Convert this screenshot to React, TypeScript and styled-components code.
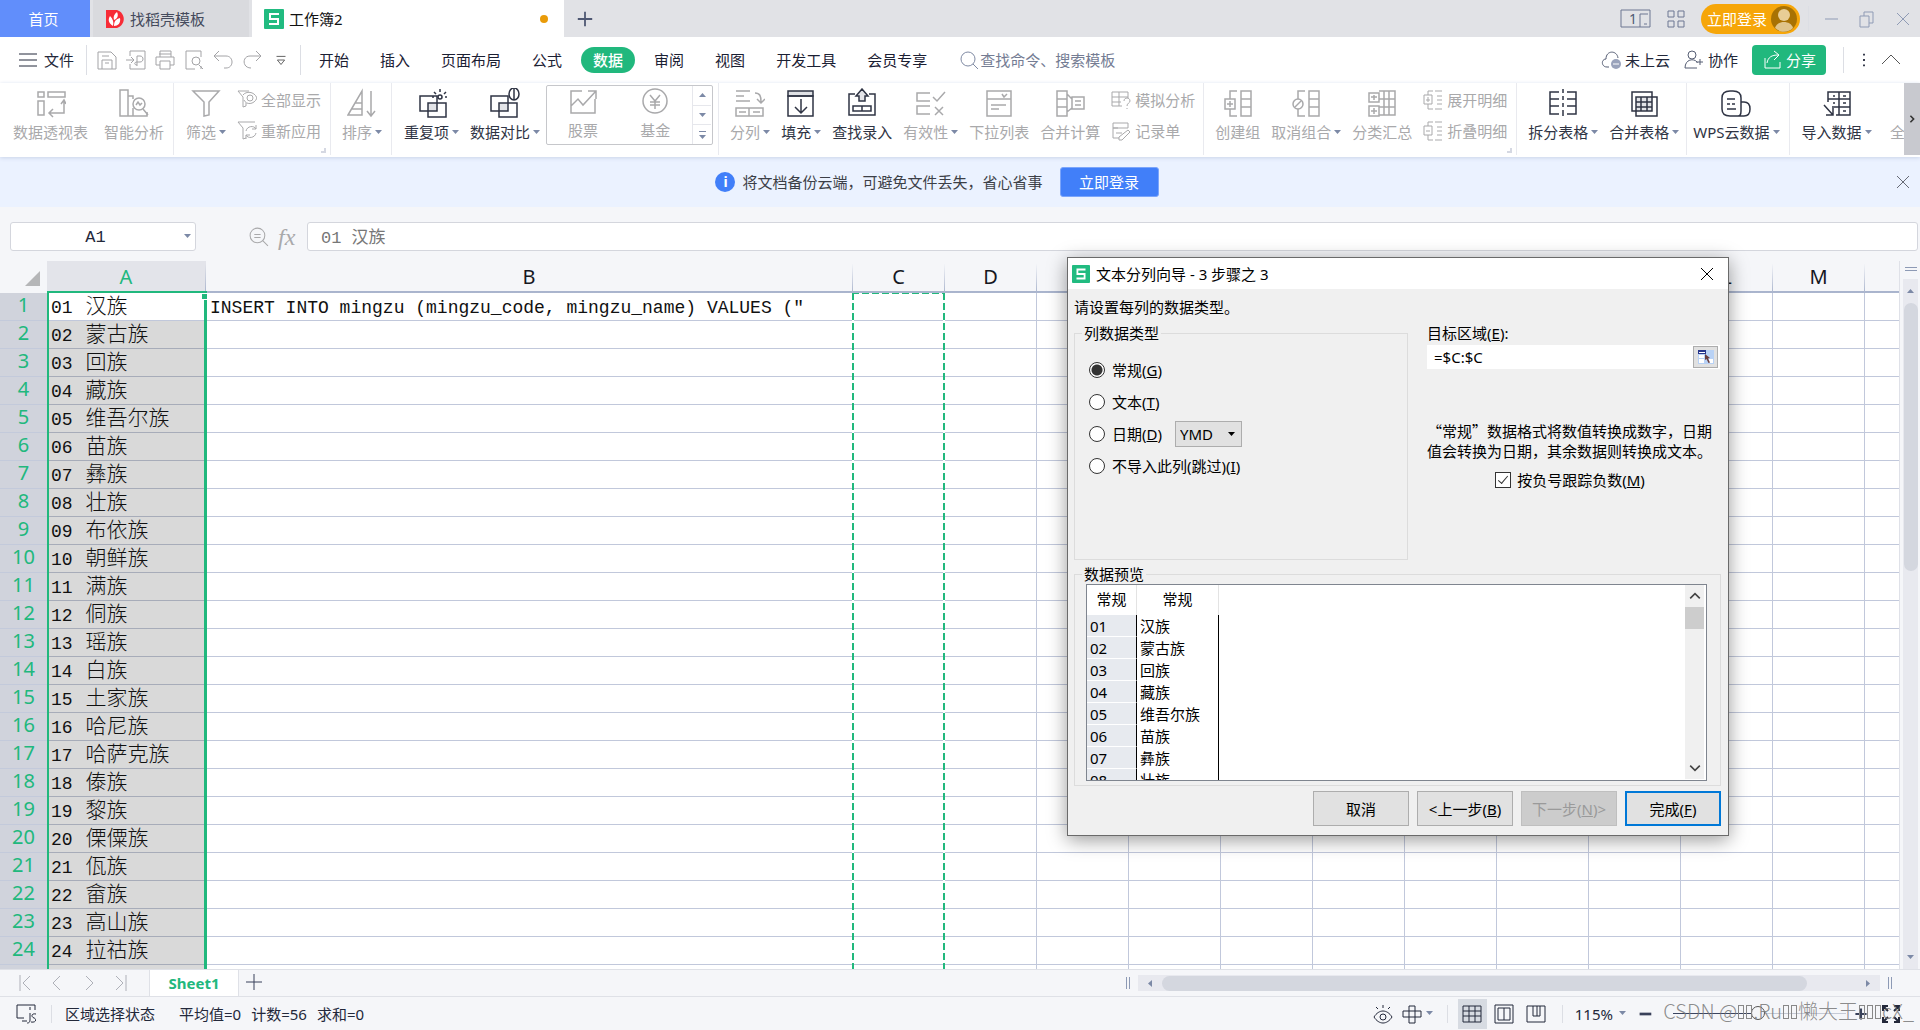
import React from 'react';
import styled, { createGlobalStyle, css } from 'styled-components';

const UI = `"Noto Sans", "Noto Sans CJK SC", sans-serif`;
const CJK = `"Noto Sans CJK SC", "Noto Sans", sans-serif`;
const MONO = `"Liberation Mono", "Noto Sans CJK SC", monospace`;
const GREEN = '#21b87d';
const INK = '#23283a';
const MUTED = '#a9a9ab';
const LINE = '#c1c8db';

const Global = createGlobalStyle`
  *, *::before, *::after { box-sizing: border-box; }
  body { margin: 0; background: #f5f6f9; overflow: hidden; }
  button, input, select { font: inherit; color: inherit; margin: 0; padding: 0; border: 0; background: none; }
  button { cursor: pointer; white-space: nowrap; }
  svg { display: block; flex: none; }
`;

/* ---------- icons ---------- */

const ICONS: Record<string, React.ReactNode> = {
  pivot: <path d="M2 4h6v5H2zM12 4h17v5H12zM2 13h6v14H2zM28 13v12H13M25 16l3-4 2 4M17 21l-4 4 4 4" />,
  smart: <><path d="M1 2h8v26H1zM9 8h5v3M9 28h19v-4M14 20v8" /><circle cx="20" cy="16" r="6" /><path d="M17 17l2-3 2 3 2-2M24 21l5 6" /></>,
  funnel: <path d="M2 3h26L18 14v13l-5 1V14z" />,
  sort: <path d="M1 27L15 3v24zM4 21h11M8 15h7M24 3v25M20 23l4 5 4-5" />,
  repeat: <><path d="M11 15h9v8h-9z" fill="#e3e4e8" stroke="none" /><path d="M3 8h17v15H3zM11 15h18v14H11z" /><circle cx="23" cy="9" r="2" /><path d="M23 1v3M17 4l2 2M29 4l-2 2M17 9h-2M28 9h3" /></>,
  compare: <><path d="M9 15h9v8H9z" fill="#e3e4e8" stroke="none" /><path d="M1 8h17v15H1zM9 15h18v14H9z" /><ellipse cx="24" cy="6" rx="5" ry="6" fill="#fff" /><path d="M24 0v12" /></>,
  stock: <path d="M14 5H3v22h24V13M3 20l7-7 5 6L28 5M20 5h8v8" />,
  fund: <><circle cx="15" cy="15" r="12" /><path d="M10 9l5 6 5-6M15 15v8M10 16h10M10 19h10" /></>,
  split: <path d="M1 3h14M1 8h8M1 13h14M1 20h27v8H1zM14 20v8M4 24h7M18 24h7M20 5c5 0 6 3 6 9M22 11l4 4 4-4" />,
  fill: <><path d="M2 3h25v5H2z" fill="#dfe1e5" /><path d="M2 8h25v20H2zM15 11v13M9 19l6 6 6-6" /></>,
  lookup: <><path d="M8 6H2v21h26V6h-6M6 18h18v5H6zM15 18v5" /><path d="M12 13V8H9l6-7 6 7h-3v5z" fill="#e3e4e8" /></>,
  valid: <path d="M14 5H1v8h13M14 18H1v8h13M17 9l4 4 8-9M19 19l8 8M27 19l-8 8" />,
  dropdown: <><path d="M3 3h24v8H3zM3 11h24v17H3zM7 17h15M7 21h8" /><path d="M18 6l2 3 3-3" /></>,
  consolidate: <path d="M2 3h10v25H2zM2 11h10M2 19h10M12 6l5 5v9l-5 4M17 9h12v12H17zM20 13h6M20 17h6" />,
  group: <path d="M28 3H18v25h10zM18 11h10M18 19h10M14 3H7v8M14 28H7v-7M2 11h10v10H2zM7 13v6M4 16h6" />,
  ungroup: <><path d="M28 3H18v25h10zM18 11h10M18 19h10M14 3H7v8M14 28H7v-7" /><circle cx="7" cy="16" r="5" /><path d="M4 19l6-6" /></>,
  subtotal: <path d="M12 3h16v24H12M17 3v24M22 3v24M12 11h16M12 19h16M2 5h10v9H2zM2 18h10v10H2zM7 7v5M4 9h6M7 20v6M4 23h6" />,
  splitTable: <path d="M11 4H2v22h9M2 11h9M2 18h9M19 4h9v22h-9M28 11h-9M28 18h-9M15 1v4M15 8v4M15 15v4M15 22v6" />,
  mergeTable: <><path d="M7 9h16v14H7z" fill="#e3e4e8" stroke="none" /><path d="M3 4h20v19H3zM7 9h21v19H7zM12 9v14M18 9v14M7 14h16M7 19h16" /></>,
  cloudData: <path d="M9 28c-5 0-8-2-8-7V10C1 5 4 3 9 3h3c5 0 8 2 8 7v5M9 28h14c4 0 6-3 6-7s-2-7-6-7h-3v9c0 3-1 5-3 5M6 11h8M6 16h3M11 16h3M6 21h9" />,
  importData: <path d="M6 14V4h22v23H14M17 4v23M6 11h22M10 19h18M11 8h2M21 8h3M11 15h2M21 15h3M21 23h3M2 17l9 10M11 20v7H4" />,
  all: <path d="M4 4h20v20H4z" stroke="none" />,
};

const SMALL: Record<string, React.ReactNode> = {
  showAll: <><path d="M12 1H1l5 6v10l3-1v-3" /><path d="M6 5c3-4 11-4 14 3-3 7-11 7-13 2" /><circle cx="13" cy="8" r="3" /></>,
  reapply: <><path d="M18 1H1l5 6v11l3-1" /><path d="M9 10c1-5 8-6 10-2M19 4v4h-4M19 12c-1 5-8 6-10 2M9 18v-4h4" /></>,
  whatIf: <path d="M11 16H1V2h16v6M1 7h16M1 12h9M8 2v14M13 11c0-4 6-4 6 0 0 2-3 2-3 5M16 18v1" />,
  record: <path d="M8 17H2V7h5M2 2h15v5H2zM5 12h6M17 9l2 2-8 8H8v-3z" />,
  expand: <path d="M10 1H5v4M10 19H5v-5M1 5h8v9H1zM5 7v5M3 10h4M12 1h7M14 6h5M14 10h5M14 14h5M12 19h7" />,
  collapse: <path d="M10 1H5v4M10 19H5v-5M1 5h8v9H1zM3 10h4M12 1h7M14 6h5M14 10h5M14 14h5M12 19h7" />,
  save: <path d="M1 2h13l5 5v12H1zM5 19v-9h10v9M5 6h7M8 13h4" />,
  export: <path d="M4 6V1h15v18H4v-5M0 10h7M5 7l3 3-3 3M11 16V6h3c4 0 4 6 0 6h-3c-3 0-3 3 0 3" />,
  print: <path d="M5 7V1h11v6M5 15H1V7h18v8h-4M5 11h10v8H5zM4 4h12" />,
  preview: <><path d="M11 19H2V1h15v6M17 16v3" /><circle cx="12" cy="11" r="4" /><path d="M15 15l4 4" /></>,
  undo: <path d="M2 6h11c8 0 8 12 0 12h-2M6 1L1 6l5 5" />,
  redo: <path d="M18 6H8c-8 0-8 12 1 12M14 1l5 5-5 5" />,
  burger: <path d="M1 4h18M1 10h18M1 16h18" />,
  more: <path d="M5 6h10M6 10l4 5 4-5z" />,
  search: <><circle cx="9" cy="9" r="7" /><path d="M14 14l5 5" /></>,
  plus: <path d="M10 2v16M2 10h16" />,
  cloud: <><path d="M8 17H6c-6 0-6-8-1-8C5 0 16 0 17 8" /><circle cx="15" cy="14" r="5" fill="#9aa3bb" stroke="none" /><path d="M12 14h6" stroke="#fff" /></>,
  team: <><circle cx="8" cy="5" r="4" /><path d="M13 18H1c0-9 9-10 12-6v1M16 9v6M13 12h6" /></>,
  share: <path d="M3 8v10h15v-6M5 13c1-6 5-8 11-8M12 1l5 4-5 5" />,
  dots: <path d="M10 3v2M10 9v2M10 15v2" strokeWidth="2" />,
  up: <path d="M1 14l9-9 9 9" />,
  grid4: <path d="M2 2h6v6H2zM12 2h6v6h-6zM2 12h6v6H2zM12 12h6v6h-6z" />,
  min: <path d="M4 10h13" />,
  restore: <path d="M3 7h9v11H3zM7 7V3h9v11h-4" />,
  close: <path d="M4 4l12 12M16 4L4 16" />,
  lens: <><circle cx="9" cy="9" r="7" /><path d="M14 14l5 5M6 8h6M6 11h6" /></>,
  first: <path d="M5 2v16M15 3l-7 7 7 7" />,
  prev: <path d="M13 3l-7 7 7 7" />,
  next: <path d="M7 3l7 7-7 7" />,
  last: <path d="M15 2v16M5 3l7 7-7 7" />,
  right: <path d="M8 6l4 4-4 4" strokeWidth="2" />,
  sbUp: <path d="M4 13l6-6 6 6" />,
  sbDown: <path d="M4 7l6 6 6-6" />,
  macro: <path d="M8 14H1V1h18v5M14 6v-3M6 17h5M14 9v7c0 3-2 3-3 3M20 10c-5-1-5 3-2 4s2 5-3 4" />,
  eye: <><path d="M1 13c5-8 13-8 18 0-5 8-13 8-18 0zM10 1v3M3 3l2 2M17 3l-2 2" /><circle cx="10" cy="13" r="3" /></>,
  cross: <path d="M7 2h6v17H7zM1 7h18v6H1z" />,
  sheet: <path d="M1 2h18v16H1zM1 7h18M1 12h18M7 2v16M13 2v16" />,
  pages: <path d="M1 1h18v18H1zM4 4h12v12H4zM10 4v12" />,
  breaks: <path d="M1 2h18v16H1zM7 2v10h7V2M11 2v10" />,
  full: <path d="M2 7V2h5M2 2l5 5M13 2h5v5M18 2l-5 5M18 13v5h-5M18 18l-5-5M7 18H2v-5M2 18l5-5" />,
};

const Icon = ({ name, size = 20, color = 'currentColor', w = 1 }: { name: string; size?: number; color?: string; w?: number }) => (
  <svg width={size} height={size} viewBox="0 0 20 20" fill="none" stroke={color} strokeWidth={w} aria-hidden="true">{SMALL[name]}</svg>
);
const BigIcon = ({ name }: { name: string }) => (
  <svg width="30" height="30" viewBox="0 0 30 30" fill="none" stroke="currentColor" strokeWidth="1.5" aria-hidden="true">{ICONS[name]}</svg>
);
const Caret = ({ dir = 'down', color = '#7c89a6' }: { dir?: 'down' | 'up' | 'left' | 'right'; color?: string }) => {
  const d = { down: 'M0 1h7L3.5 5z', up: 'M0 5h7L3.5 1z', left: 'M5 0v7L1 3.5z', right: 'M1 0v7l4-3.5z' }[dir];
  return <svg width="7" height="7" viewBox="0 0 7 7" fill={color} aria-hidden="true"><path d={d} /></svg>;
};
const WpsMark = ({ size }: { size: number }) => (
  <svg width={size} height={size} viewBox="0 0 20 20" aria-hidden="true">
    <rect width="20" height="20" rx="1" fill="#21bb80" />
    <path d="M15 5H6v5h8v5H5" fill="none" stroke="#fff" strokeWidth="2" />
  </svg>
);

/* ---------- frame ---------- */

const Page = styled.div`
  height: 100vh; display: flex; flex-direction: column; position: relative; overflow: hidden;
  font: 15px/20px ${UI}; color: ${INK}; background: #f5f6f9;
`;
const Row = styled.div<{ gap?: number }>`display: flex; align-items: center; gap: ${p => p.gap ?? 0}px;`;
const Spacer = styled.div`flex: 1;`;
const VRule = styled.i<{ h?: number; m?: string }>`
  flex: none; width: 1px; height: ${p => p.h ?? 30}px; margin: ${p => p.m ?? '0'}; background: #dcdee4;
`;
const IconButton = styled.button<{ w?: number }>`
  display: flex; align-items: center; justify-content: center; width: ${p => p.w ?? 20}px; height: 24px; flex: none;
`;

const TitleBar = styled.header`
  flex: none; height: 37px; display: flex; align-items: stretch; background: #e1e2e6; padding-right: 7px;
`;
const HomeTab = styled.button`width: 90px; padding-right: 3px; background: #618efb; color: #fff;`;
const DocTab = styled.button<{ active?: boolean; w: number }>`
  width: ${p => p.w}px; padding: 0 16px 0 12px; display: flex; align-items: center; gap: 5px;
  margin-left: 3px; background: ${p => (p.active ? '#fff' : '#d9dade')}; color: ${p => (p.active ? '#111' : '#444a5c')};
`;
const DirtyDot = styled.i`width: 8px; height: 8px; border-radius: 50%; background: #e99b09; margin-left: auto;`;
const LoginPill = styled.button`
  display: flex; align-items: center; gap: 4px; height: 30px; padding: 0 3px 0 6px; border-radius: 15px;
  background: #f6a609; color: #fff;
`;

const MenuBar = styled.nav`
  flex: none; height: 46px; display: flex; align-items: center; background: #fff; padding: 0 12px 0 18px;
`;
const FileButton = styled.button`display: flex; align-items: center; gap: 6px;`;
const QuickTools = styled.div`display: flex; align-items: center; gap: 9px; color: #a3a3a6; padding: 0 9px 0 10px;`;
const MenuTabs = styled.div`display: flex; align-items: center; gap: 7px; padding-left: 6px;`;
const MenuTab = styled.button<{ active?: boolean }>`
  height: 26px; padding: 0 12px; border-radius: 13px; color: #1b2033;
  ${p => p.active && css`background: ${GREEN}; color: #fff; font-weight: 500;`}
`;
const SearchBox = styled.label`display: flex; align-items: center; gap: 1px; margin-left: 20px; color: #7f8aa3;
  input { width: 200px; outline: 0; }
  input::placeholder { color: #747c93; opacity: 1; }
`;
const MenuAction = styled.button`display: flex; align-items: center; gap: 4px; margin-right: 14px;`;
const ShareButton = styled.button`
  display: flex; align-items: center; gap: 4px; height: 30px; padding: 0 10px; border-radius: 4px;
  background: ${GREEN}; color: #fff;
`;

/* ---------- ribbon ---------- */

const Ribbon = styled.div`
  flex: none; display: flex; height: 74px; background: #fff; box-shadow: 0 1px 4px #c9d3e8; position: relative; z-index: 1;
`;
const RibbonScroll = styled.div`flex: 1; min-width: 0; overflow: hidden; display: flex; height: 72px;`;
const RibbonNext = styled.button`
  width: 16px; height: 72px; background: #c8c9cf; color: #333; display: flex; align-items: center; justify-content: center;
`;
const Group = styled.div<{ l?: number; r?: number; gap?: number; last?: boolean }>`
  flex: none; display: flex; gap: ${p => p.gap ?? 11}px; padding: 5px ${p => p.r ?? 9}px 0 ${p => p.l ?? 12}px; position: relative;
  border-right: ${p => (p.last ? 0 : 1)}px solid #e9eaef;
`;
const GroupCorner = styled.i`
  position: absolute; right: 4px; bottom: 2px; width: 5px; height: 5px; border: solid #d5d8e2; border-width: 0 2px 2px 0;
`;
const Tool = styled.button<{ on?: boolean }>`
  display: flex; flex-direction: column; align-items: center; gap: 4px; height: 56px; color: ${p => (p.on ? '#2f3444' : MUTED)};
`;
const ToolLabel = styled.span`display: flex; align-items: center; gap: 3px; line-height: 20px;`;
const ToolStack = styled.div`display: flex; flex-direction: column; gap: 7px;`;
const MiniTool = styled.button`display: flex; align-items: center; gap: 4px; height: 24px; color: ${MUTED};`;
const Gallery = styled.div`
  display: flex; width: 167px; height: 60px; margin: -3px 0 0 -5px; border: 1px solid #c6c7cb; border-radius: 2px;
  gap: 42px; padding-left: 21px;
`;
const GalleryArrows = styled.div`
  display: flex; flex-direction: column; width: 19px; margin-left: -20px; border-left: 1px solid #e6e7ec;
  button { flex: 1; display: flex; align-items: center; justify-content: center; }
  button + button { border-top: 1px solid #e6e7ec; }
`;

const BigTool = ({ icon, label, on, menu }: { icon: string; label: string; on?: boolean; menu?: boolean }) => (
  <Tool on={on}><BigIcon name={icon} /><ToolLabel>{label}{menu && <Caret />}</ToolLabel></Tool>
);
const SmallTool = ({ icon, label }: { icon: string; label: string }) => (
  <MiniTool><Icon name={icon} /><span>{label}</span></MiniTool>
);

/* ---------- notice and formula bar ---------- */

const Notice = styled.div`
  flex: none; height: 50px; background: #ebf2ff; display: grid; grid-template-columns: 1fr auto 1fr; align-items: center;
  color: #3c3f47; padding: 0 7px;
`;
const NoticeText = styled.div`display: flex; align-items: center; gap: 7px; margin-right: 46px;`;
const InfoDot = styled.i`
  width: 20px; height: 20px; border-radius: 50%; background: #417ff9; color: #fff; font: 700 14px/20px ${UI}; text-align: center;
`;
const NoticeButton = styled.button`
  width: 99px; height: 30px; margin-left: 10px; background: #417ff9; color: #fff; border: 1px solid #7ba5fb; border-radius: 3px;
`;
const NoticeClose = styled(IconButton)`justify-self: end; color: #666a75;`;

const FormulaBar = styled.div`
  flex: none; height: 54px; padding: 15px 2px 10px 10px; display: flex; align-items: center; font: 17px/20px ${MONO};
`;
const NameBox = styled.label`
  width: 186px; height: 29px; display: flex; align-items: center; background: #fff; border: 1px solid #d4d6dd; border-radius: 3px;
  padding-right: 4px; margin-right: 52px;
  input { flex: 1; min-width: 0; text-align: center; padding: 2px 4px 0 0; outline: 0; }
`;
const Fx = styled.span`font: italic 24px/24px "Liberation Serif", serif; color: #a9a9ab; width: 28px; padding-left: 9px; margin-right: 10px;`;
const FormulaInput = styled.input`
  && { flex: 1; height: 29px; padding: 0 13px 2px; background: #fff; border: 1px solid #d4d6dd; border-radius: 3px; color: #777; outline: 0; }
`;

/* ---------- grid ---------- */

const Workspace = styled.main`flex: 1; min-height: 0; display: flex;`;
const SheetView = styled.div`
  flex: 1; min-width: 0; overflow: hidden; position: relative; background: linear-gradient(#f5f6f9 32px, #fff 32px);
  border-right: 1px solid #dfe1e8;
`;
const Grid = styled.table`
  table-layout: fixed; border-collapse: separate; border-spacing: 0; font: 18px/24px ${MONO}; color: #111;
`;
const ColHead = styled.th<{ on?: boolean }>`
  height: 32px; padding: 1px 0 0; font: 400 20px/26px ${UI}; color: ${p => (p.on ? GREEN : '#16181f')};
  border-bottom: 1px solid #a9b4cd; border-right: 1px solid;
  border-image: linear-gradient(transparent 10%, #a9b4cd) 1;
  background: ${p => (p.on ? '#e3e4ea' : 'transparent')};
  box-shadow: inset 0 -1px #a9b4cd;
`;
const Corner = styled.th`
  height: 32px; padding: 0 7px 7px 0; vertical-align: bottom;
  svg { margin-left: auto; }
`;
const RowHead = styled.th`
  height: 28px; padding: 0 0 3px; font: 400 20px/24px ${UI}; color: ${GREEN}; background: #d0d3dc; border-bottom: 1px solid #c3cadb;
  text-align: center;
`;
const Cell = styled.td<{ picked?: boolean }>`
  height: 28px; padding: 3px 0 0 4px; white-space: pre; overflow: hidden; line-height: 24px;
  border-bottom: 1px solid ${p => (p.picked ? '#a7acb9' : LINE)}; border-right: 1px solid ${LINE};
  background: ${p => (p.picked ? '#d9d9d9' : '#fff')};
`;
const Code = styled.span`margin-right: 2px;`;
const Name = styled.span`font-size: 21px; line-height: 20px; font-weight: 300;`;
const Selection = styled.div`
  position: absolute; left: 47px; top: 30px; bottom: -10px; width: 160px; border: solid ${GREEN}; border-width: 2px 3px 0 2px;
`;
const Handle = styled.i`
  position: absolute; right: -4px; top: 0; width: 7px; height: 7px; background: ${GREEN}; border: 1px solid #fff;
`;
const Marching = styled.div`
  position: absolute; left: 852px; top: 32px; bottom: -10px; width: 93px;
  background:
    repeating-linear-gradient(180deg, ${GREEN} 0 7px, #fff 7px 10px) left / 2px 100% no-repeat,
    repeating-linear-gradient(180deg, ${GREEN} 0 7px, #fff 7px 10px) right / 2px 100% no-repeat,
    repeating-linear-gradient(90deg, ${GREEN} 0 7px, #fff 7px 10px) top / 100% 1px no-repeat;
`;

const VScroll = styled.div`
  flex: none; width: 20px; padding: 6px 2px 0 3px; display: flex; flex-direction: column; gap: 8px;
`;
const Grip = styled.i<{ v?: boolean }>`
  flex: none; align-self: center;
  ${p => (p.v
    ? css`width: 4px; height: 12px; border: solid #8d9ab5; border-width: 0 1px;`
    : css`width: 12px; height: 4px; border: solid #8d9ab5; border-width: 1px 0;`)}
`;
const VTrack = styled.div`
  flex: 1; min-height: 0; background: #e8e9ef; display: flex; flex-direction: column; align-items: center;
  button { height: 24px; }
`;
const VThumb = styled.div`width: 14px; height: 268px; border-radius: 7px; background: #d4d7df;`;

/* ---------- bottom bars ---------- */

const SheetBar = styled.div`
  flex: none; height: 28px; border: solid #dfe1e7; border-width: 1px 0; display: flex; align-items: stretch; padding-right: 28px;
`;
const SheetNav = styled.div`display: flex; align-items: center; gap: 12px; padding-left: 15px; width: 149px; color: #aeb0b8;`;
const SheetTab = styled.button`width: 90px; background: #fff; color: ${GREEN}; font-weight: 700; border: solid #dfe1e7; border-width: 0 1px;`;
const HScroll = styled.div`width: 766px; display: flex; align-items: center; gap: 8px;`;
const HTrack = styled.div`
  flex: 1; height: 16px; background: #e8e9ef; display: flex; align-items: center;
  button { width: 24px; display: flex; justify-content: center; }
`;
const HThumb = styled.div`width: 645px; height: 15px; border-radius: 8px; background: #d4d7df;`;

const StatusBar = styled.footer`flex: none; height: 33px; display: flex; align-items: center; padding: 0 6px 0 16px; position: relative;`;
const ViewButton = styled.button<{ on?: boolean }>`
  width: 29px; height: 30px; display: flex; align-items: center; justify-content: center; background: ${p => (p.on ? '#d7dbe2' : 'none')};
  margin-right: 3px;
`;
const Zoom = styled.input`
  && { width: 173px; height: 20px; appearance: none; margin: 0 8px 0 9px; }
  &::-webkit-slider-runnable-track { height: 1px; background: linear-gradient(90deg, #3b4560 48%, #c5cad6 48%); }
  &::-webkit-slider-thumb { appearance: none; width: 14px; height: 14px; margin-top: -7px; border: 1px solid #555; border-radius: 50%; background: #f5f6f9; }
`;
const Watermark = styled.span`
  position: absolute; right: 6px; bottom: 5px; font: 300 20px/28px ${CJK}; color: rgba(120, 120, 120, 0.85); white-space: pre;
  pointer-events: none;
`;
const Missing = styled.i`display: inline-block; width: 6px; height: 14px; margin: 0 1px; border: 1px solid #888;`;

/* ---------- dialog ---------- */

const Dialog = styled.section`
  position: absolute; left: 1067px; top: 257px; width: 662px; z-index: 2; background: #f0f0f0; border: 1px solid #6a6a6a; color: #000;
  box-shadow: 0 4px 18px rgba(0, 0, 0, 0.4); font: 15px/20px ${UI};
`;
const DialogTitle = styled.div`
  height: 31px; background: #fff; display: flex; align-items: center; gap: 6px; padding: 0 11px 0 4px;
  h1 { margin: 0; flex: 1; font: inherit; }
`;
const DialogBody = styled.div`padding: 8px 7px 9px 6px;`;
const Intro = styled.p`margin: 0 0 6px;`;
const Columns = styled.div`display: flex; gap: 18px; align-items: flex-start;`;
const FieldBox = styled.fieldset<{ w?: string; h: number; top?: number }>`
  position: relative; margin: ${p => p.top ?? 10}px 0 0; padding: 0; min-width: 0; width: ${p => p.w ?? 'auto'}; height: ${p => p.h}px;
  border: 1px solid #dcdcdc;
  legend { float: left; margin-top: -11px; margin-left: 7px; padding: 0 2px; background: #f0f0f0; position: relative; z-index: 1; }
`;
const Options = styled.div`clear: both; padding: 13px 0 0 14px; display: flex; flex-direction: column; gap: 4px;`;
const Option = styled.div`height: 28px; display: flex; align-items: center;
  label { display: flex; align-items: center; gap: 7px; }
`;
const Radio = styled.input.attrs({ type: 'radio', name: 'column-type' })`
  && { appearance: none; width: 16px; height: 16px; border: 1px solid #333; border-radius: 50%; background: #fff; }
  &&:checked { background: radial-gradient(circle, #333 5px, #fff 6px); }
`;
const FormatSelect = styled.div`
  display: grid; width: 67px; height: 26px; margin-left: 13px; align-items: center;
  select, svg { grid-area: 1 / 1; }
  select { appearance: none; height: 26px; padding-left: 4px; background: #e1e1e1; border: 1px solid #adadad; }
  svg { justify-self: end; margin-right: 7px; pointer-events: none; }
`;
const Target = styled.div`flex: 1; padding-left: 1px;`;
const TargetBox = styled.div`
  display: flex; width: 293px; height: 24px; margin-top: 2px; padding: 1px 2px 1px 7px; background: #fff; align-items: stretch;
  input { flex: 1; min-width: 0; outline: 0; }
  button { width: 25px; background: #e1e1e1; border: 1px solid #adadad; display: flex; align-items: center; justify-content: center; }
`;
const Hint = styled.p`margin: 52px 0 9px; font-family: ${CJK}; width: 292px; white-space: nowrap;`;
const Check = styled.label`display: flex; align-items: center; gap: 6px; justify-content: center; padding-right: 8px;`;
const CheckBox = styled.input.attrs({ type: 'checkbox' })`
  && { appearance: none; width: 16px; height: 16px; border: 1px solid #333; background: #fff; display: grid; place-items: center; }
  &&:checked::after { content: ''; width: 10px; height: 5px; border: solid #333; border-width: 0 0 1px 1px; transform: translateY(-2px) rotate(-50deg); }
`;
const PreviewBox = styled.div`
  clear: both; height: 197px; border: 1px solid #7f858f; background: #fff; display: flex; justify-content: space-between;
  padding: 0 2px 1px 0; overflow: hidden; position: relative;
`;
const PreviewWrap = styled.div`padding: 8px 13px 0 11px;`;
const PreviewTable = styled.table`
  border-collapse: separate; border-spacing: 0; table-layout: fixed; width: 132px; align-self: flex-start;
  th { height: 30px; padding: 0 0 2px; font-weight: 400; border-right: 1px solid #e3e3e3; }
  td { height: 22px; padding: 0 0 0 3px; line-height: 20px; border-right: 1px solid #000; white-space: nowrap; }
  td:first-child { background: #e7eaef; border-bottom: 1px solid #fff; }
`;
const PreviewScroll = styled.div`
  flex: none; width: 19px; background: #f0f0f0; display: flex; flex-direction: column; justify-content: space-between; color: #444;
  button { height: 22px; display: flex; align-items: center; justify-content: center; width: 19px; }
`;
const PreviewThumb = styled.div`height: 22px; background: #cdcdcd; margin-bottom: auto;`;
const Actions = styled.div`display: flex; justify-content: flex-end; gap: 8px; margin-top: 5px;`;
const ActionButton = styled.button<{ main?: boolean }>`
  && { width: 96px; height: 35px; background: #e1e1e1; border: ${p => (p.main ? '2px solid #0078d7' : '1px solid #adadad')}; }
  &&:disabled { background: #ccc; border-color: #bfbfbf; color: #9a9a9a; }
`;

/* ---------- data ---------- */

const NAMES = ['汉族', '蒙古族', '回族', '藏族', '维吾尔族', '苗族', '彝族', '壮族', '布依族', '朝鲜族', '满族', '侗族', '瑶族', '白族', '土家族', '哈尼族', '哈萨克族', '傣族', '黎族', '傈僳族', '佤族', '畲族', '高山族', '拉祜族'];
const PEOPLES = NAMES.map((name, i) => ({ code: String(i + 1).padStart(2, '0'), name }));
const COLS: { id: string; label: string; width: number }[] = [
  { id: 'A', label: 'A', width: 159 },
  { id: 'B', label: 'B', width: 647 },
  ...'CDEFGHIJKLM'.split('').map(c => ({ id: c, label: c, width: 92 })),
  { id: 'N', label: '', width: 92 },
];
const GRID_WIDTH = COLS.reduce((sum, c) => sum + c.width, 47);
const QUERY = 'INSERT INTO mingzu (mingzu_code, mingzu_name) VALUES ("';
const MENUS = ['开始', '插入', '页面布局', '公式', '数据', '审阅', '视图', '开发工具', '会员专享'];

const Header = () => (
  <TitleBar>
    <HomeTab>首页</HomeTab>
    <DocTab w={156}>
      <svg width="20" height="20" viewBox="0 0 20 20" aria-hidden="true">
        <path d="M1 1h11c9 3 9 15 0 18H1z" fill="#f72c37" />
        <path d="M8 17C3 14 3 10 5 7c3 3 4 6 3 10zM9 11c-1-3 0-6 3-8 2 4 0 7-3 8zM9 17c0-5 2-7 6-8 1 5-2 8-6 8z" fill="#fff" />
      </svg>
      找稻壳模板
    </DocTab>
    <DocTab active w={312}><WpsMark size={20} />工作簿2<DirtyDot /></DocTab>
    <Row><IconButton w={42} aria-label="新建"><Icon name="plus" w={2} color="#4f5873" size={18} /></IconButton></Row>
    <Spacer />
    <Row gap={15}>
      <svg width="31" height="20" viewBox="0 0 31 20" fill="none" stroke="#6d7792" aria-hidden="true">
        <path d="M1 1h29v17H1zM20 18V5h8M24 15h3" />
        <text x="9" y="15" fontSize="14" fill="#4f5873" stroke="none">1</text>
      </svg>
      <Icon name="grid4" color="#6d7792" />
      <LoginPill>立即登录
        <svg width="26" height="26" viewBox="0 0 26 26" aria-hidden="true">
          <circle cx="13" cy="13" r="13" fill="#a87203" /><circle cx="13" cy="9" r="6" fill="#e8cd96" />
          <path d="M4 22c2-8 16-8 18 0-5 5-13 5-18 0z" fill="#e0c48a" />
        </svg>
      </LoginPill>
    </Row>
    <Row gap={16}>
      <VRule h={25} m="0 -4px 0 8px" />
      <IconButton aria-label="最小化"><Icon name="min" color="#8f9bb5" /></IconButton>
      <IconButton aria-label="还原"><Icon name="restore" color="#8f9bb5" /></IconButton>
      <IconButton aria-label="关闭"><Icon name="close" color="#8f9bb5" /></IconButton>
    </Row>
  </TitleBar>
);

const Menu = () => (
  <MenuBar>
    <FileButton><Icon name="burger" w={1} />文件</FileButton>
    <VRule m="0 0 0 12px" />
    <QuickTools>
      {['save', 'export', 'print', 'preview', 'undo', 'redo', 'more'].map(n => (
        <IconButton key={n} aria-label={n}><Icon name={n} size={n === 'more' ? 18 : 20} color={n === 'more' ? '#555' : 'currentColor'} /></IconButton>
      ))}
    </QuickTools>
    <VRule />
    <MenuTabs>{MENUS.map(m => <MenuTab key={m} active={m === '数据'}>{m}</MenuTab>)}</MenuTabs>
    <SearchBox><Icon name="search" /><input placeholder="查找命令、搜索模板" aria-label="查找命令" /></SearchBox>
    <Spacer />
    <MenuAction><Icon name="cloud" color="#555d73" />未上云</MenuAction>
    <MenuAction><Icon name="team" color="#555d73" />协作</MenuAction>
    <ShareButton><Icon name="share" />分享</ShareButton>
    <VRule h={26} m="0 10px 0 17px" />
    <IconButton aria-label="更多"><Icon name="dots" size={18} /></IconButton>
    <IconButton w={34} aria-label="收起"><Icon name="up" color="#555" /></IconButton>
  </MenuBar>
);

const Tools = () => (
  <Ribbon>
    <RibbonScroll>
      <Group l={13} gap={16}>
        <BigTool icon="pivot" label="数据透视表" /><BigTool icon="smart" label="智能分析" />
      </Group>
      <Group>
        <BigTool icon="funnel" label="筛选" menu />
        <ToolStack><SmallTool icon="showAll" label="全部显示" /><SmallTool icon="reapply" label="重新应用" /></ToolStack>
        <GroupCorner />
      </Group>
      <Group l={11}><BigTool icon="sort" label="排序" menu /></Group>
      <Group r={5}>
        <BigTool icon="repeat" label="重复项" on menu />
        <BigTool icon="compare" label="数据对比" on menu />
        <Gallery>
          <BigTool icon="stock" label="股票" />
          <BigTool icon="fund" label="基金" />
          <GalleryArrows>
            <button aria-label="上一行"><Caret dir="up" /></button>
            <button aria-label="下一行"><Caret /></button>
            <button aria-label="展开"><svg width="7" height="8" viewBox="0 0 7 8" fill="#7c89a6" aria-hidden="true"><path d="M0 0h7v1H0zM0 4h7L3.5 8z" /></svg></button>
          </GalleryArrows>
        </Gallery>
      </Group>
      <Group l={11} r={8}>
        <BigTool icon="split" label="分列" menu />
        <BigTool icon="fill" label="填充" on menu />
        <BigTool icon="lookup" label="查找录入" on />
        <BigTool icon="valid" label="有效性" menu />
        <BigTool icon="dropdown" label="下拉列表" />
        <BigTool icon="consolidate" label="合并计算" />
        <ToolStack><SmallTool icon="whatIf" label="模拟分析" /><SmallTool icon="record" label="记录单" /></ToolStack>
      </Group>
      <Group l={11}>
        <BigTool icon="group" label="创建组" />
        <BigTool icon="ungroup" label="取消组合" menu />
        <BigTool icon="subtotal" label="分类汇总" />
        <ToolStack><SmallTool icon="expand" label="展开明细" /><SmallTool icon="collapse" label="折叠明细" /></ToolStack>
        <GroupCorner />
      </Group>
      <Group r={7} l={11}>
        <BigTool icon="splitTable" label="拆分表格" on menu />
        <BigTool icon="mergeTable" label="合并表格" on menu />
      </Group>
      <Group l={6}><BigTool icon="cloudData" label="WPS云数据" on menu /></Group>
      <Group last><BigTool icon="importData" label="导入数据" on menu /><BigTool icon="all" label="全" /></Group>
    </RibbonScroll>
    <RibbonNext aria-label="向右滚动"><Icon name="right" size={16} w={2} /></RibbonNext>
  </Ribbon>
);

const Sheet = () => (
  <Workspace>
    <SheetView>
      <Grid style={{ width: GRID_WIDTH }}>
        <colgroup><col style={{ width: 47 }} />{COLS.map(c => <col key={c.id} style={{ width: c.width }} />)}</colgroup>
        <thead>
          <tr>
            <Corner><svg width="15" height="15" viewBox="0 0 15 15" aria-hidden="true"><path d="M15 0v15H0z" fill="#b5b6b8" /></svg></Corner>
            {COLS.map(c => <ColHead key={c.id} on={c.id === 'A'}>{c.label}</ColHead>)}
          </tr>
        </thead>
        <tbody>
          {PEOPLES.map((p, i) => (
            <tr key={p.code}>
              <RowHead scope="row">{i + 1}</RowHead>
              <Cell picked={i > 0}><Code>{p.code} </Code><Name>{p.name}</Name></Cell>
              <Cell>{i === 0 ? QUERY : ''}</Cell>
              {COLS.slice(2).map(c => <Cell key={c.id} />)}
            </tr>
          ))}
          <tr><RowHead /><Cell picked />{COLS.slice(1).map(c => <Cell key={c.id} />)}</tr>
        </tbody>
      </Grid>
      <Selection><Handle /></Selection>
      <Marching />
    </SheetView>
    <VScroll>
      <Grip />
      <VTrack><button aria-label="向上"><Caret dir="up" /></button><VThumb /><Spacer /><button aria-label="向下"><Caret /></button></VTrack>
    </VScroll>
  </Workspace>
);

const Key = ({ k }: { k: string }) => <>(<u>{k}</u>)</>;

const Wizard = () => (
  <Dialog role="dialog" aria-label="文本分列向导">
    <DialogTitle><WpsMark size={18} /><h1>文本分列向导 - 3 步骤之 3</h1><IconButton aria-label="关闭"><Icon name="close" color="#000" /></IconButton></DialogTitle>
    <DialogBody>
      <Intro>请设置每列的数据类型。</Intro>
      <Columns>
        <FieldBox w="334px" h={227}>
          <legend>列数据类型</legend>
          <Options>
            <Option><label><Radio defaultChecked /><span>常规<Key k="G" /></span></label></Option>
            <Option><label><Radio /><span>文本<Key k="T" /></span></label></Option>
            <Option>
              <label><Radio /><span>日期<Key k="D" /></span></label>
              <FormatSelect><select aria-label="日期格式"><option>YMD</option></select><Caret color="#000" /></FormatSelect>
            </Option>
            <Option><label><Radio /><span>不导入此列(跳过)<Key k="I" /></span></label></Option>
          </Options>
        </FieldBox>
        <Target>
          <label htmlFor="target">目标区域<Key k="E" />:</label>
          <TargetBox>
            <input id="target" defaultValue="=$C:$C" />
            <button aria-label="选择区域">
              <svg width="16" height="14" viewBox="0 0 16 14" aria-hidden="true">
                <path d="M0 0h16v14H0z" fill="#b9d2f5" /><path d="M0 0h8v4H0z" fill="#26358c" /><path d="M1 2h6v1H1zM1 5h5v3H1zM1 9h5v4H1zM11 9h4v4h-4z" fill="#fff" />
                <path d="M7 4l5 4-2 .5 2 4-1.500.5-2-4-1.500 1z" fill="#6a3d3d" />
              </svg>
            </button>
          </TargetBox>
          <Hint>“常规”数据格式将数值转换成数字，日期<br />值会转换为日期，其余数据则转换成文本。</Hint>
          <Check><CheckBox defaultChecked /><span>按负号跟踪负数<Key k="M" /></span></Check>
        </Target>
      </Columns>
      <FieldBox h={212} top={14}>
        <legend>数据预览</legend>
        <PreviewWrap>
          <PreviewBox>
            <PreviewTable>
              <colgroup><col width="50" /><col width="82" /></colgroup>
              <thead><tr><th>常规</th><th>常规</th></tr></thead>
              <tbody>{PEOPLES.slice(0, 8).map(p => <tr key={p.code}><td>{p.code}</td><td>{p.name}</td></tr>)}</tbody>
            </PreviewTable>
            <PreviewScroll>
              <button aria-label="向上"><Icon name="sbUp" size={16} w={2} /></button>
              <PreviewThumb />
              <button aria-label="向下"><Icon name="sbDown" size={16} w={2} /></button>
            </PreviewScroll>
          </PreviewBox>
        </PreviewWrap>
      </FieldBox>
      <Actions>
        <ActionButton>取消</ActionButton>
        <ActionButton>&lt;上一步<Key k="B" /></ActionButton>
        <ActionButton disabled>下一步<Key k="N" />&gt;</ActionButton>
        <ActionButton main>完成<Key k="F" /></ActionButton>
      </Actions>
    </DialogBody>
  </Dialog>
);

export default function App() {
  return (
    <Page>
      <Global />
      <Header />
      <Menu />
      <Tools />
      <Notice>
        <span />
        <NoticeText><InfoDot>i</InfoDot>将文档备份云端，可避免文件丢失，省心省事<NoticeButton>立即登录</NoticeButton></NoticeText>
        <NoticeClose aria-label="关闭提示"><Icon name="close" /></NoticeClose>
      </Notice>
      <FormulaBar>
        <NameBox><input aria-label="名称框" defaultValue="A1" /><Caret /></NameBox>
        <Icon name="lens" color="#a9a9ab" size={21} w={1} />
        <Fx>fx</Fx>
        <FormulaInput aria-label="编辑栏" defaultValue="01 汉族" />
      </FormulaBar>
      <Sheet />
      <SheetBar>
        <SheetNav>{['first', 'prev', 'next', 'last'].map(n => <IconButton key={n} aria-label={n}><Icon name={n} /></IconButton>)}</SheetNav>
        <SheetTab>Sheet1</SheetTab>
        <IconButton w={30} aria-label="新建工作表"><Icon name="plus" color="#39415a" w={1} /></IconButton>
        <Spacer />
        <HScroll>
          <Grip v />
          <HTrack><button aria-label="向左"><Caret dir="left" /></button><HThumb /><Spacer /><button aria-label="向右"><Caret dir="right" /></button></HTrack>
          <Grip v />
        </HScroll>
      </SheetBar>
      <StatusBar>
        <Icon name="macro" />
        <VRule h={18} m="0 13px 0 15px" />
        <span>区域选择状态</span>
        <Row gap={10} style={{ marginLeft: 24 }}><span>平均值=0</span><span>计数=56</span><span>求和=0</span></Row>
        <Spacer />
        <Row gap={9}>
          <Icon name="eye" w={1} />
          <Row gap={4}><Icon name="cross" w={1} /><Caret /></Row>
        </Row>
        <VRule h={18} m="0 10px 0 14px" />
        <ViewButton on aria-label="普通视图"><Icon name="sheet" w={1} /></ViewButton>
        <ViewButton aria-label="页面布局"><Icon name="pages" w={1} /></ViewButton>
        <ViewButton aria-label="分页预览"><Icon name="breaks" w={1} /></ViewButton>
        <VRule h={18} m="0 12px 0 8px" />
        <Row gap={6}>115%<Caret /></Row>
        <Row>
          <IconButton w={38} aria-label="缩小"><Icon name="min" w={3} size={18} color="#39415a" /></IconButton>
          <Zoom type="range" min={0} max={200} defaultValue={98} aria-label="缩放" />
          <IconButton w={14} aria-label="放大"><Icon name="plus" w={3} size={14} color="#39415a" /></IconButton>
          <IconButton w={46} aria-label="全屏"><Icon name="full" w={2} size={20} /></IconButton>
        </Row>
        <Watermark>CSDN @<Missing /><Missing />.Ru<Missing /><Missing />懒大王<Missing /><Missing /><Missing />cX_</Watermark>
      </StatusBar>
      <Wizard />
    </Page>
  );
}
